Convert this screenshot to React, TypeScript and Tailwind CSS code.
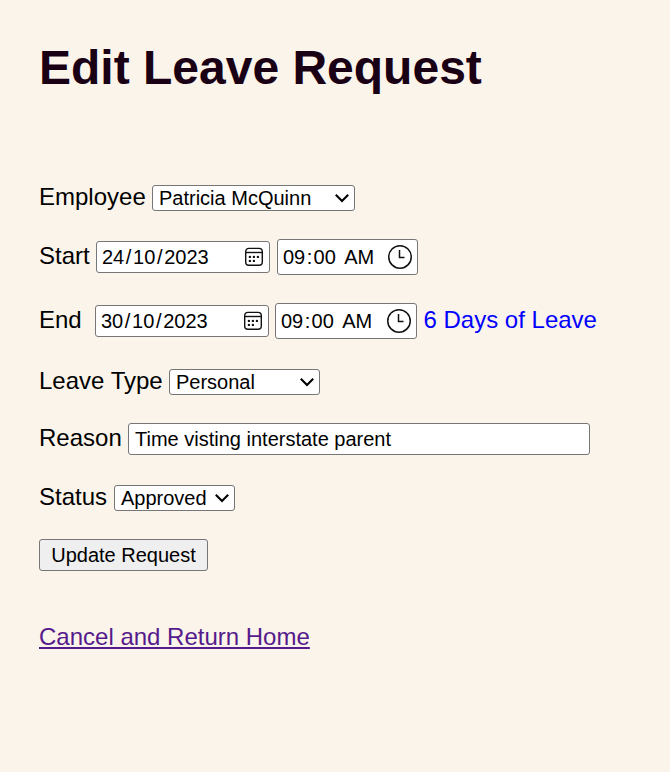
import type { ReactNode } from 'react';

const box = 'shrink-0 flex rounded-[3px] border border-[#767676] bg-white text-[20px] text-black whitespace-pre';

function Row({ children }: { children: ReactNode }) {
  return <div className="flex items-baseline">{children}</div>;
}

function Label({ text, width }: { text: string; width: string }) {
  return <label className={`shrink-0 text-[24px] leading-[27px] whitespace-nowrap ${width}`}>{text}</label>;
}

function Select({ value, width }: { value: string; width: string }) {
  return (
    <div className={`${box} h-[26px] items-baseline justify-between pt-px pr-[5px] pl-[6px] leading-[23px] ${width}`}>
      <span>{value}</span>
      <svg className="mt-[3px] self-start" width="14" height="16" viewBox="0 0 14 16" fill="none" stroke="#000" strokeWidth="2.1">
        <path d="M0.8 4.8 L7 11 L13.2 4.8" />
      </svg>
    </div>
  );
}

function Field({ children }: { children: string }) {
  return <span className="px-px">{children}</span>;
}

function Slash() {
  return <span className="pr-[0.7px] pl-[0.6px]">/</span>;
}

function DateInput({ day, className }: { day: string; className: string }) {
  return (
    <div className={`${box} h-[32px] w-[174px] justify-between pt-[4px] pr-[5px] pl-[4px] leading-[23px] ${className}`}>
      <span>
        <Field>{day}</Field>
        <Slash />
        <Field>10</Field>
        <Slash />
        <Field>2023</Field>
      </span>
      <svg width="20" height="20" viewBox="0 0 20 20" className="mt-[1px]" fill="none" stroke="#111" strokeWidth="1.4">
        <rect x="1.7" y="1.4" width="16.6" height="16.8" rx="3.2" />
        <path d="M1.7 5.5H18.3" />
        <g fill="#111" stroke="none">
          <circle cx="5.9" cy="9.9" r="1.2" />
          <circle cx="9.9" cy="9.9" r="1.2" />
          <circle cx="13.9" cy="9.9" r="1.2" />
          <circle cx="5.9" cy="13.9" r="1.2" />
          <circle cx="9.9" cy="13.9" r="1.2" />
        </g>
      </svg>
    </div>
  );
}

function TimeInput({ className }: { className: string }) {
  return (
    <div className={`${box} h-[36px] justify-between pt-[6px] pr-[5px] pl-[4px] leading-[23px] ${className}`}>
      <span>
        <Field>09</Field>
        <span className="px-[0.4px]">:</span>
        <Field>00</Field>
        <span className="pr-[0.8px]"> </span>
        <Field>AM</Field>
      </span>
      <svg className="-mt-[2px]" width="24" height="26" viewBox="0 0 24 26" fill="none" stroke="#111" strokeWidth="1.5">
        <circle cx="12" cy="12.9" r="11.25" />
        <path d="M11.5 6V13.5H16.5" />
      </svg>
    </div>
  );
}

export default function App() {
  return (
    <main className="h-[772px] w-[670px] overflow-hidden bg-[#fbf4ea] pt-[40px] pl-[39px] font-['Liberation_Sans',Arial,sans-serif] text-black">
      <h1 className="text-[48px] leading-[55px] font-bold text-[#1a0015]">Edit Leave Request</h1>
      <form className="mt-[88px] flex flex-col gap-7">
        <Row>
          <Label text="Employee" width="w-[113px]" />
          <Select value="Patricia McQuinn" width="w-[203px]" />
        </Row>
        <Row>
          <Label text="Start" width="w-[57px]" />
          <DateInput day="24" className="mr-[7px]" />
          <TimeInput className="w-[141px]" />
        </Row>
        <Row>
          <Label text="End" width="w-[56px]" />
          <DateInput day="30" className="mr-[6px]" />
          <TimeInput className="w-[142px]" />
          <span className="ml-[6.5px] text-[24px] leading-[27px] text-[#0000ff]">6 Days of Leave</span>
        </Row>
        <Row>
          <Label text="Leave Type" width="w-[130px]" />
          <Select value="Personal" width="w-[151px]" />
        </Row>
        <Row>
          <Label text="Reason" width="w-[89px]" />
          <div className={`${box} h-[32px] w-[462px] pt-[4px] pl-[6px] leading-[23px]`}>Time visting interstate parent</div>
        </Row>
        <Row>
          <Label text="Status" width="w-[75px]" />
          <Select value="Approved" width="w-[121px]" />
        </Row>
        <button
          type="button"
          className="h-[32px] w-[169px] rounded-[3px] border border-[#767676] bg-[#efefef] text-[20px] leading-[23px] whitespace-nowrap"
        >
          Update Request
        </button>
      </form>
      <a className="mt-[52px] inline-block text-[24px] leading-[27px] text-[#551a8b] underline">Cancel and Return Home</a>
    </main>
  );
}
